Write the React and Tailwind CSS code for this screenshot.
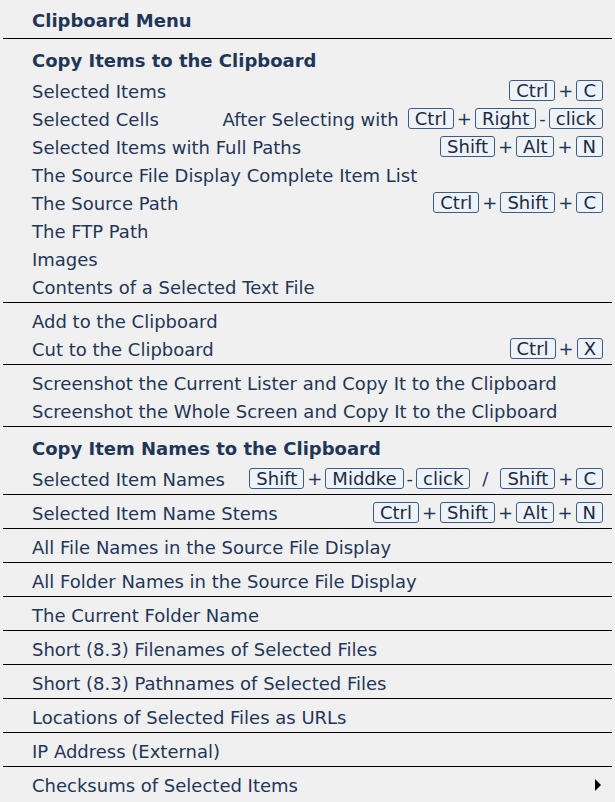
import React from 'react';

const Key = ({ children }) => (
  <span className="inline-flex h-[21px] items-center rounded-[3px] border border-[#3d5d85] bg-[#eef3fb] px-[6px] pt-[2px] leading-none text-[#1a2a40]">
    {children}
  </span>
);

const Sep = ({ children, wide }) => (
  <span className={`${wide ? 'px-[12px]' : 'px-[3px]'} pt-[2px] leading-none`}>{children}</span>
);

// strings starting with "|" are separators between keys
const Combo = ({ parts }) => (
  <span className="flex items-center">
    {parts.map((p, i) =>
      p.startsWith('|') ? (
        <Sep key={i} wide={p === '|/'}>{p.slice(1)}</Sep>
      ) : (
        <Key key={i}>{p}</Key>
      )
    )}
  </span>
);

const Row = ({ label, children }) => (
  <div className="flex h-[28px] items-center justify-between">
    <span className="pt-[3px]">{label}</span>
    {children}
  </div>
);

const Header = ({ children }) => (
  <div className="flex h-[28px] items-center pt-[3px] font-bold">{children}</div>
);

const SINGLES = [
  'All File Names in the Source File Display',
  'All Folder Names in the Source File Display',
  'The Current Folder Name',
  'Short (8.3) Filenames of Selected Files',
  'Short (8.3) Pathnames of Selected Files',
  'Locations of Selected Files as URLs',
  'IP Address (External)',
];

export default function App() {
  return (
    <div
      className="min-h-[802px] w-[615px] bg-[#f0f0f0] px-[3px] text-[18px] text-[#1f3658]"
      style={{ fontFamily: '"DejaVu Sans", Verdana, sans-serif' }}
    >
      <div className="flex h-[39px] items-center border-b border-black pl-[29px] pt-[3px] font-bold">
        Clipboard Menu
      </div>

      <div className="border-b border-black pb-[2px] pl-[29px] pr-[9px] pt-[6px]">
        <Header>Copy Items to the Clipboard</Header>
        <div className="mt-[3px]">
          <Row label="Selected Items">
            <Combo parts={['Ctrl', '|+', 'C']} />
          </Row>
          <Row label="Selected Cells">
            <span className="flex items-center">
              <span className="mr-[9px] pt-[3px]">After Selecting with</span>
              <Combo parts={['Ctrl', '|+', 'Right', '|-', 'click']} />
            </span>
          </Row>
          <Row label="Selected Items with Full Paths">
            <Combo parts={['Shift', '|+', 'Alt', '|+', 'N']} />
          </Row>
          <Row label="The Source File Display Complete Item List" />
          <Row label="The Source Path">
            <Combo parts={['Ctrl', '|+', 'Shift', '|+', 'C']} />
          </Row>
          <Row label="The FTP Path" />
          <Row label="Images" />
          <Row label="Contents of a Selected Text File" />
        </div>
      </div>

      <div className="border-b border-black pb-[2px] pl-[29px] pr-[9px] pt-[3px]">
        <Row label="Add to the Clipboard" />
        <Row label="Cut to the Clipboard">
          <Combo parts={['Ctrl', '|+', 'X']} />
        </Row>
      </div>

      <div className="border-b border-black pb-[2px] pl-[29px] pr-[9px] pt-[3px]">
        <Row label="Screenshot the Current Lister and Copy It to the Clipboard" />
        <Row label="Screenshot the Whole Screen and Copy It to the Clipboard" />
      </div>

      <div className="border-b border-black pb-[2px] pl-[29px] pr-[9px] pt-[6px]">
        <Header>Copy Item Names to the Clipboard</Header>
        <div className="mt-[3px]">
          <Row label="Selected Item Names">
            <Combo parts={['Shift', '|+', 'Middke', '|-', 'click', '|/', 'Shift', '|+', 'C']} />
          </Row>
        </div>
      </div>

      <div className="border-b border-black pb-[2px] pl-[29px] pr-[9px] pt-[3px]">
        <Row label="Selected Item Name Stems">
          <Combo parts={['Ctrl', '|+', 'Shift', '|+', 'Alt', '|+', 'N']} />
        </Row>
      </div>

      {SINGLES.map((s) => (
        <div key={s} className="border-b border-black pb-[2px] pl-[29px] pr-[9px] pt-[3px]">
          <Row label={s} />
        </div>
      ))}

      <div className="pb-[2px] pl-[29px] pr-[9px] pt-[3px]">
        <Row label="Checksums of Selected Items">
          <svg width="7" height="12" viewBox="0 0 7 12" className="mr-[1px] mt-[2px]">
            <polygon points="0,0 6,6 0,12" fill="#000" />
          </svg>
        </Row>
      </div>
    </div>
  );
}
